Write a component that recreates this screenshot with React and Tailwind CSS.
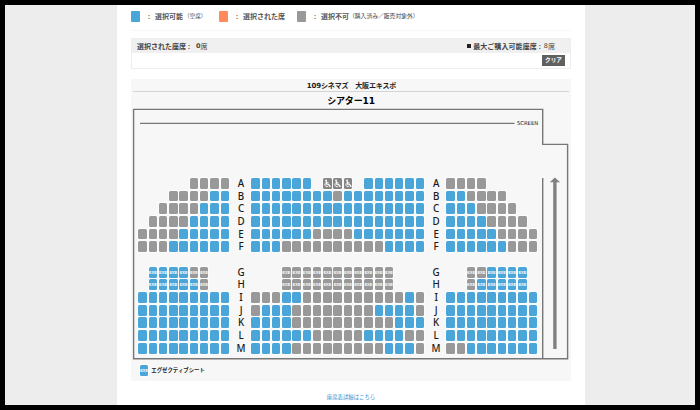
const rows = [
  { name: "A", seats: [".....gggg", "bbbbbb.www.bbbbbb", "gggg....."] },
  { name: "B", seats: ["...ggggbb", "bbbbbbbbgbbbbbbbb", "bbgggg..."] },
  { name: "C", seats: ["..ggggbbb", "bbbbbbbbbbbbbbbbb", "bbbgggg.."] },
  { name: "D", seats: [".ggggbbbb", "bbbbbbbbbbbbbbbbb", "bbbbgggg."] },
  { name: "E", seats: ["ggggbbbbb", "bbbbbbggggbbbbbbb", "bbbbbgggg"] },
  { name: "F", seats: ["gggbbbbbb", "bbbggggggggggbbbb", "bbbbbbggg"] },
  { name: "", seats: [".........", ".................", "........."] },
  { name: "G", seats: [".eeeexx..", "...xxxxxxxxxxx...", "..xxeeee."] },
  { name: "H", seats: [".eeeeex..", "...xxxxxxxxxxx...", "..xeeeee."] },
  { name: "I", seats: ["bbbbbbbbb", "gggbbggggggggggbg", "bbbbbbbbb"] },
  { name: "J", seats: ["bbbbbbbbb", "gbbbggggggggbbbbg", "bbbbbbbbb"] },
  { name: "K", seats: ["bbbbbbbbb", "bbbbggggggggggbbb", "bbbbbbbbb"] },
  { name: "L", seats: ["bbbbbbbbb", "bbbbbbgggggbbbbgg", "bbbbbbbbb"] },
  { name: "M", seats: ["bbbbbbbbb", "bbbbgggggggggbbbg", "ggbbbbbbb"] },
];

// b/e = open, g/x/w = taken (e and x are executive seats, w is wheelchair space)
const seatColor = {
  b: "bg-[#4aa5d9]",
  e: "bg-[#4aa5d9]",
  g: "bg-[#999999]",
  x: "bg-[#999999]",
  w: "bg-[#858585]",
};

function Wheelchair() {
  return (
    <svg viewBox="0 0 9 11" className="h-full w-full" fill="none" stroke="#fff" strokeWidth="1.2">
      <circle cx="3.3" cy="2.2" r="1" fill="#fff" stroke="none" />
      <path d="M3.5 3v3.4h2.6l1.2 2.3h.9M3.6 4.8h2.2" />
      <path d="M2.5 5.4a2.1 2.1 0 1 0 3.2 2.8" strokeWidth="0.9" />
    </svg>
  );
}

function Seat({ type }) {
  if (type === ".") return <div className="w-[10.28px]" />;
  return (
    <div className="w-[10.28px]">
      <div className={`flex h-[10.8px] w-[8.4px] items-center justify-center rounded-[1.5px] shadow-[0_0_0_1px_#fcfcfc] ${seatColor[type]}`}>
        {type === "w" && <Wheelchair />}
        {(type === "e" || type === "x") && (
          <span className="pt-px font-['Liberation_Sans',sans-serif] text-[4px] leading-none font-bold text-white">EXE</span>
        )}
      </div>
    </div>
  );
}

function RowName({ name }) {
  return (
    <div className="w-[20.56px] text-center font-['Noto_Sans',sans-serif] text-[9.8px] leading-[11px] font-medium text-[#1a1a1a]">{name}</div>
  );
}

function Block({ seats }) {
  return (
    <div className="flex">
      {seats.split("").map((s, i) => (
        <Seat key={i} type={s} />
      ))}
    </div>
  );
}

function Legend() {
  return (
    <div className="flex h-[26px] items-center border-b border-[#f7f7f7] pb-[3px] text-[7px] leading-none font-bold text-[#555]">
      <div className="flex w-[88px] items-center">
        <i className="mr-[8px] h-[11px] w-[9px] rounded-[1px] bg-[#4aa5d9]" />
        <span className="w-[7px]">:</span>
        <span>選択可能</span>
        <span className="ml-px pt-px text-[5.6px] font-normal text-[#444]">（空席）</span>
      </div>
      <div className="flex w-[78px] items-center">
        <i className="mr-[8px] h-[11px] w-[9px] rounded-[1px] bg-[#ff8a5c]" />
        <span className="w-[7px]">:</span>
        <span>選択された席</span>
      </div>
      <div className="flex items-center">
        <i className="mr-[8px] h-[11px] w-[9px] rounded-[1px] bg-[#999999]" />
        <span className="w-[7px]">:</span>
        <span>選択不可</span>
        <span className="pt-px text-[5.8px] font-normal text-[#444]">（購入済み／販売対象外）</span>
      </div>
    </div>
  );
}

function Selection() {
  return (
    <div className="mt-[7px] h-[31px] border border-[#eeeeee] text-[7px] text-[#444]">
      <div className="flex h-[14px] items-center justify-between bg-[#f0f0f0] pr-[15px] pl-[5px] leading-none font-bold">
        <span className="flex items-center">
          <span>選択された座席</span>
          <span className="ml-[2px] w-[8px]">:</span>
          <span className="font-['DejaVu_Sans',sans-serif] text-[6.5px]">0</span>
          <span className="font-normal">席</span>
        </span>
        <span className="flex items-center">
          <i className="mr-[2px] h-[4px] w-[4px] bg-[#222]" />
          <span className="tracking-[0.08px]">最大ご購入可能座席</span>
          <span className="ml-[2px] w-[5px]">:</span>
          <span className="font-['DejaVu_Sans',sans-serif] text-[6.5px] font-normal">8</span>
          <span className="font-normal">席</span>
        </span>
      </div>
      <div className="flex h-[15px] items-center justify-end pr-[5px]">
        <button className="h-[11px] w-[23px] bg-[#606060] text-[5.6px] leading-none font-bold text-white">クリア</button>
      </div>
    </div>
  );
}

function Room() {
  return (
    <div className="relative h-[252px] pt-[70px] pl-[7.4px]">
      {/* walls, screen line and aisle arrow */}
      <svg className="absolute inset-0" width="440" height="252" viewBox="0 0 440 252" fill="none" stroke="#777" strokeWidth="1.4">
        <path d="M2.6 1.4H411.7V36.4H436.6V250.8H2.6Z" />
        <path d="M411.7 70V250.8" />
        <path d="M9 15.4H383.5" />
        <path d="M423.9 73V241" stroke="#808080" strokeWidth="3.4" />
        <path d="M423.9 69.5l5.2 4.8h-10.4z" fill="#808080" stroke="none" />
      </svg>
      <span className="absolute top-[12px] left-[386px] font-['DejaVu_Sans',sans-serif] text-[5.3px] leading-[7px] tracking-[-0.05px] text-[#222]">SCREEN</span>
      {rows.map((row, i) => (
        <div key={i} className="flex h-[12.68px]">
          <Block seats={row.seats[0]} />
          <RowName name={row.name} />
          <Block seats={row.seats[1]} />
          <RowName name={row.name} />
          <Block seats={row.seats[2]} />
        </div>
      ))}
    </div>
  );
}

export default function App() {
  return (
    <div className="h-[410px] w-[700px] overflow-hidden bg-black p-[5px] font-['Noto_Sans','Noto_Sans_CJK_JP',sans-serif]">
      <div className="flex h-full bg-[#ededed] pl-[112px]">
        <main className="w-[468px] bg-white px-[14px] whitespace-nowrap">
          <Legend />
          <Selection />
          <section className="mt-[10px] h-[302px] bg-[#f7f7f7]">
            <h2 className="mx-[2px] h-[13px] border-b border-[#d4d4d4] pl-px text-center text-[7px] leading-[14px] font-bold tracking-[-0.15px] text-[#222]">
              <span className="font-['DejaVu_Sans',sans-serif]">109</span>シネマズ　大阪エキスポ
            </h2>
            <h1 className="h-[16px] text-center text-[9px] leading-[17px] font-bold tracking-[-0.15px] text-black">
              シアター<span className="font-['DejaVu_Sans',sans-serif]">11</span>
            </h1>
            <Room />
            <div className="flex items-center gap-px pt-[5px] pl-[9px] text-[5.4px] leading-none font-bold text-[#222]">
              <Seat type="e" />
              エグゼクティブシート
            </div>
          </section>
          <p className="mt-[13px] text-center text-[5.4px] leading-[7px] text-[#2b94cf]">座席表詳細はこちら</p>
        </main>
      </div>
    </div>
  );
}
